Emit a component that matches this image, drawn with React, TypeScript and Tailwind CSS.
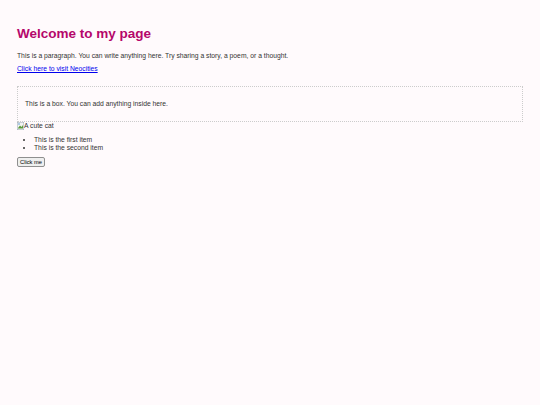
export default function App() {
  return (
    <div className="min-h-[405px] w-[540px] bg-[#fffafc] px-[17px] pt-[26px] text-[6.75px] leading-[8px] text-[#333] [font-family:'Liberation_Sans',Arial,sans-serif]">
      <h1 className="text-[13.5px] leading-[16px] font-bold text-[#b5076b]">Welcome to my page</h1>
      <p className="mt-[10px]">This is a paragraph. You can write anything here. Try sharing a story, a poem, or a thought.</p>
      <p className="mt-[5px]">
        <a href="#" className="text-[#0000ee] underline">Click here to visit Neocities</a>
      </p>
      <div className="mt-[13px] border border-dotted border-[#ccc] px-[7px] py-[13px]">
        <p>This is a box. You can add anything inside here.</p>
      </div>
      <div className="flex items-center">
        <svg width="7" height="8" viewBox="0 0 14 16" className="shrink-0">
          <rect x="0.5" y="0.5" width="13" height="15" fill="#f3f3f3" stroke="#9aa7b3" />
          <path d="M2 12 L6 7 L9 10 L12 6 V13 H2 Z" fill="#5b9a3a" />
          <circle cx="4" cy="4" r="1.5" fill="#4a8fd0" />
        </svg>
        <span>A cute cat</span>
      </div>
      <ul className="mt-[6px] list-disc pl-[17px]">
        <li>This is the first item</li>
        <li>This is the second item</li>
      </ul>
      <button className="mt-[5px] rounded-[2px] border border-[#8f8f8f] bg-[#efefef] px-[2px] py-[1px] text-[5.75px] leading-[6px] text-black">
        Click me
      </button>
    </div>
  );
}
